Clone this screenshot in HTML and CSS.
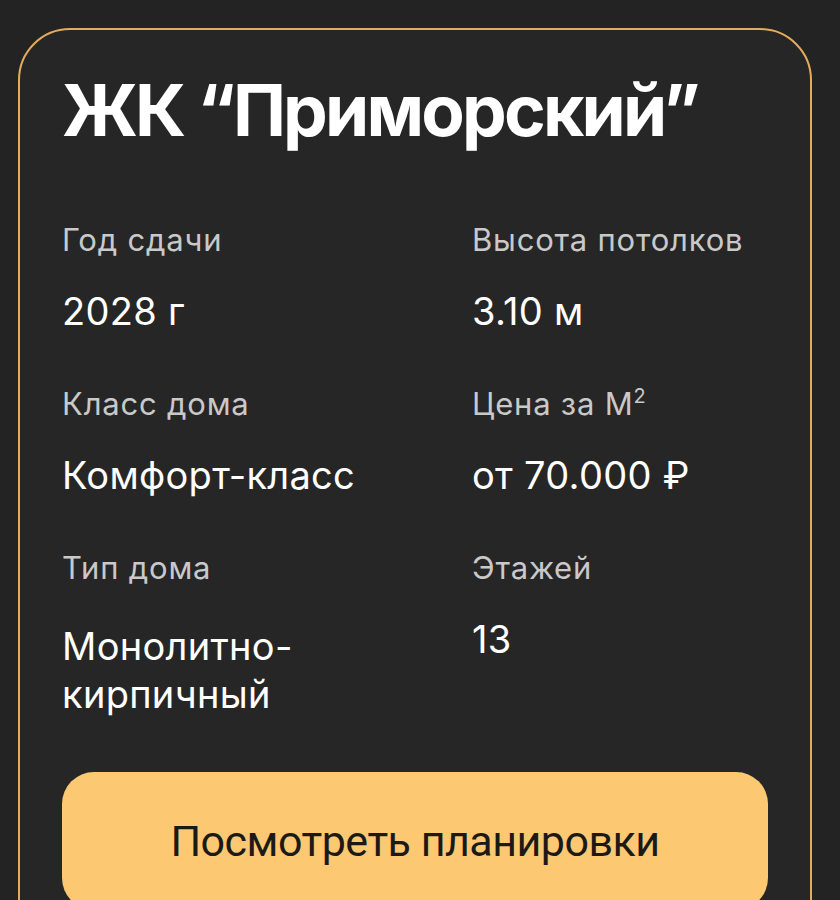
FILE: index.html
```html
<!DOCTYPE html>
<html lang="ru">
<head>
<meta charset="utf-8">
<title>ЖК Приморский</title>
<link rel="stylesheet" href="styles.css">
</head>
<body>
<div class="card">
  <h1 class="title">ЖК “Приморский”</h1>
  <div class="grid">
    <div class="item">
      <div class="label">Год сдачи</div>
      <div class="value">2028 г</div>
    </div>
    <div class="item">
      <div class="label">Высота потолков</div>
      <div class="value">3.10 м</div>
    </div>
    <div class="item">
      <div class="label">Класс дома</div>
      <div class="value">Комфорт-класс</div>
    </div>
    <div class="item">
      <div class="label">Цена за М<sup class="sup">2</sup></div>
      <div class="value">от 70.000 ₽</div>
    </div>
    <div class="item">
      <div class="label">Тип дома</div>
      <div class="value value-multi">Монолитно-<br>кирпичный</div>
    </div>
    <div class="item">
      <div class="label">Этажей</div>
      <div class="value">13</div>
    </div>
  </div>
  <button class="btn">Посмотреть планировки</button>
</div>
</body>
</html>
```
FILE: styles.css
```css
html, body {
  margin: 0;
  padding: 0;
  background: #232323;
  height: 100%;
  overflow: hidden;
}
body {
  font-family: Inter, "Liberation Sans", sans-serif;
  color: #ffffff;
}
.card {
  margin: 28px 0 0 18px;
  width: 794px;
  box-sizing: border-box;
  height: 1000px;
  border: 2px solid #e2ac5c;
  border-radius: 52px;
  background: #262626;
  padding: 38px 42px 0 42px;
}
.title {
  margin: 0;
  font-size: 71px;
  line-height: 1.2;
  font-weight: 700;
  letter-spacing: -2.8px;
  color: #ffffff;
}
.grid {
  margin-top: 67px;
  display: grid;
  grid-template-columns: 410px 1fr;
  row-gap: 44px;
}
.item {
  display: flex;
  flex-direction: column;
  gap: 23px;
}
.label {
  font-size: 31px;
  line-height: 40px;
  letter-spacing: 0.8px;
  color: #c9c9c9;
}
.sup {
  font-size: 20px;
  line-height: 0;
  letter-spacing: 0;
  vertical-align: 12px;
}
.value {
  font-size: 38px;
  line-height: 57px;
  letter-spacing: 0.3px;
  color: #ffffff;
}
.value-multi {
  line-height: 48px;
  padding-top: 11px;
}
.btn {
  display: block;
  margin-top: 54px;
  width: 100%;
  height: 138px;
  border: none;
  border-radius: 32px;
  background: #fdc872;
  color: #1c1a17;
  font-family: Roboto, "Liberation Sans", sans-serif;
  font-size: 43px;
  letter-spacing: -0.5px;
  padding: 0;
}
```
